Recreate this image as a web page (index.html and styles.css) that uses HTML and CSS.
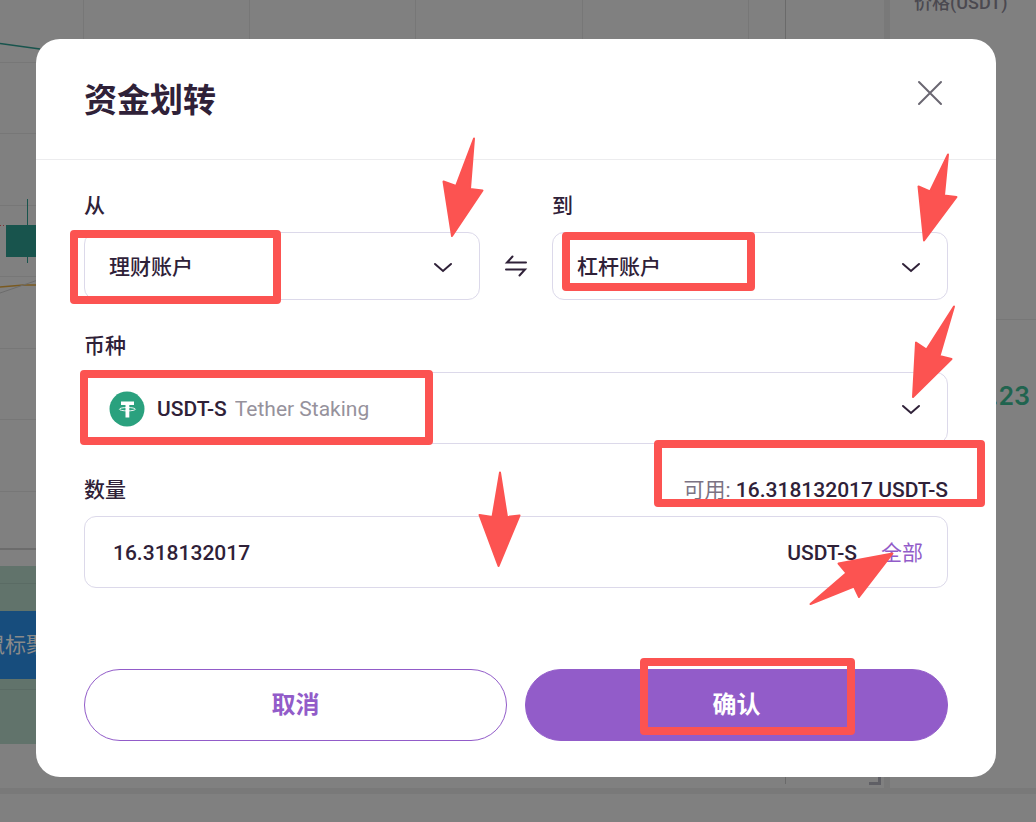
FILE: index.html
```html
<!DOCTYPE html>
<html lang="zh-CN">
<head>
  <meta charset="UTF-8">
  <meta name="viewport" content="width=device-width, initial-scale=1.0">
  <title>资金划转</title>
  <link rel="stylesheet" href="styles.css">
</head>
<body>

  <!-- Dimmed trading page -->
  <svg class="backdrop" width="1036" height="822" viewBox="0 0 1036 822" aria-hidden="true">
    <g fill="#777777">
      <rect x="83" y="0" width="1" height="40"/>
      <rect x="249" y="0" width="1" height="40"/>
      <rect x="415" y="0" width="1" height="40"/>
      <rect x="582" y="0" width="1" height="40"/>
      <rect x="748" y="0" width="1" height="40"/>
      <rect x="0" y="62" width="40" height="1"/>
      <rect x="0" y="133" width="40" height="1"/>
      <rect x="0" y="205" width="40" height="1"/>
      <rect x="0" y="276" width="40" height="1"/>
      <rect x="0" y="348" width="40" height="1"/>
      <rect x="0" y="419" width="40" height="1"/>
      <rect x="0" y="491" width="40" height="1"/>
      <rect x="990" y="319" width="46" height="1"/>
    </g>
    <rect x="785" y="0" width="1" height="784" fill="#6a6a6a"/>
    <rect x="884" y="0" width="6" height="790" fill="#797979"/>
    <rect x="0" y="788" width="1036" height="6" fill="#797979"/>
    <rect x="0" y="548" width="40" height="2" fill="#6c6c6c"/>
    <rect x="0" y="566" width="40" height="178" fill="#61736b"/>
    <rect x="0" y="583" width="40" height="1" fill="#5a6b64"/>
    <rect x="0" y="689" width="40" height="1" fill="#5a6b64"/>
    <rect x="0" y="611" width="40" height="68" fill="#174d7d"/>
    <path d="M0 43.500L40 49" stroke="#18544d" stroke-width="1.500"/>
    <path d="M0 225.500H36" stroke="#7a3535" stroke-dasharray="1 2"/>
    <rect x="27" y="199" width="1" height="64" fill="#18544d"/>
    <rect x="6" y="225" width="34" height="32" fill="#18544d"/>
    <path d="M0 287L24 285H40" stroke="#7a5a20" stroke-width="1.500" fill="none"/>
    <path d="M0 293L38 280" stroke="#6c6c6c" fill="none"/>
    <path d="M869 783.500H879.500V776" stroke="#5f5f65" stroke-width="3" fill="none"/>
    <text class="backdrop-tip" x="-16" y="652">鼠标聚</text>
    <text class="backdrop-price" x="914" y="9">价格(USDT)</text>
    <text class="backdrop-value" x="1030" y="405" text-anchor="end">.23</text>
  </svg>

  <!-- Transfer dialog -->
  <main class="overlay">
    <form class="modal" role="dialog" aria-labelledby="modal-title">
      <header class="modal-header">
        <h2 id="modal-title">资金划转</h2>
        <button type="button" class="close-btn" aria-label="关闭">
          <svg width="36" height="36" viewBox="0 0 36 36"><path d="M7 7L29 29M29 7L7 29"/></svg>
        </button>
      </header>

      <div class="modal-body">
        <div class="accounts">
          <div class="field">
            <label for="from">从</label>
            <div class="select-box">
              <select id="from">
                <option>理财账户</option>
                <option>杠杆账户</option>
              </select>
              <svg class="chevron" width="20" height="12" viewBox="0 0 20 12"><path d="M2 3L10 10L18 3"/></svg>
            </div>
          </div>
          <button type="button" class="swap-btn" aria-label="互换">
            <svg width="24" height="24" viewBox="0 0 24 24"><path d="M22 8.500H3L8.500 2.500M2 15.500H21L15.500 21.500"/></svg>
          </button>
          <div class="field">
            <label for="to">到</label>
            <div class="select-box">
              <select id="to">
                <option>杠杆账户</option>
                <option>理财账户</option>
              </select>
              <svg class="chevron" width="20" height="12" viewBox="0 0 20 12"><path d="M2 3L10 10L18 3"/></svg>
            </div>
          </div>
        </div>

        <div class="field">
          <label for="coin">币种</label>
          <div class="select-box coin-box">
            <div class="coin">
              <svg width="36" height="36" viewBox="0 0 36 36" aria-hidden="true">
                <circle cx="18" cy="18" r="17.500" fill="#2aa17e"/>
                <path d="M12 10.500H25V14H20.300V26.500H16.500V14H12Z" fill="#fff"/>
                <ellipse cx="18.400" cy="18.200" rx="8" ry="1.700" fill="none" stroke="#fff" stroke-width="0.900"/>
              </svg>
              <span class="coin-name">USDT-S</span>
            </div>
            <select id="coin">
              <option>Tether Staking</option>
            </select>
            <svg class="chevron" width="20" height="12" viewBox="0 0 20 12"><path d="M2 3L10 10L18 3"/></svg>
          </div>
        </div>

        <div class="field">
          <div class="label-row">
            <label for="amount">数量</label>
            <p class="available">可用: <strong>16.318132017 USDT-S</strong></p>
          </div>
          <div class="amount-box">
            <input id="amount" type="text" inputmode="decimal" value="16.318132017">
            <span class="unit">USDT-S</span>
            <button type="button" class="all-btn">全部</button>
          </div>
        </div>

        <div class="actions">
          <button type="button" class="btn cancel-btn">取消</button>
          <button type="submit" class="btn confirm-btn">确认</button>
        </div>
      </div>
    </form>
  </main>

  <!-- Red guide marks drawn over the dialog -->
  <svg class="marks" width="1036" height="822" viewBox="0 0 1036 822" aria-hidden="true">
    <g class="mark-box">
      <rect x="74" y="234" width="203" height="66"/>
      <rect x="566" y="236" width="185" height="51"/>
      <rect x="84" y="374" width="345" height="67"/>
      <rect x="658" y="444" width="323" height="59"/>
      <rect x="644" y="662" width="207" height="69"/>
    </g>
    <g class="mark-arrow">
      <path d="M474 138.500L456 186L443.500 181.500L452 236L482.500 190.500L470 189Z"/>
      <path d="M948 154.500L930 191.500L918.500 186.500L924 240.500L956.500 197L944 195.500Z"/>
      <path d="M954 306.500L926.500 349.500L916 342.500L913 397L951.500 359L939.500 356Z"/>
      <path d="M500 472.500L492.500 517L479.500 515L498.500 566L519.500 515.500L507 517Z"/>
      <path d="M810.500 604L854 586.500L859 597L892.500 553.500L838.500 563.500L846.500 573Z"/>
    </g>
  </svg>

</body>
</html>
```

FILE: styles.css
```css
/* General Styling */
* {
  margin: 0;
  padding: 0;
  box-sizing: border-box;
}

body {
  min-height: 100vh;
  background-color: #808080;
  color: #2f2138;
  font-family: Roboto, "Noto Sans CJK SC", sans-serif;
  font-size: 21px;
  font-weight: 500;
  line-height: 30px;
  overflow: hidden;
}

button,
input,
select {
  border: none;
  background: none;
  color: inherit;
  font: inherit;
}

button,
select {
  cursor: pointer;
}

/* Page behind the dialog */
.backdrop,
.marks {
  position: absolute;
  top: 0;
  left: 0;
}

.backdrop-tip {
  fill: #8a8a8a;
  font-size: 21px;
  font-weight: 400;
}

.backdrop-price {
  fill: #4b4950;
  font-size: 18px;
  font-weight: 500;
}

.backdrop-value {
  fill: #20644f;
  font-family: Inter, sans-serif;
  font-size: 25px;
  font-weight: 600;
}

/* Dialog */
.overlay {
  position: relative;
  padding: 39px 40px 45px 36px;
}

.modal {
  background-color: #fff;
  border-radius: 24px;
}

.modal-header {
  display: flex;
  justify-content: space-between;
  align-items: flex-start;
  padding: 36px 48px 32px;
  border-bottom: 1px solid #ececee;
}

.modal-header h2 {
  font-size: 33px;
  font-weight: 700;
  line-height: 52px;
}

.close-btn,
.swap-btn {
  display: flex;
  justify-content: center;
  align-items: center;
}

.close-btn path,
.swap-btn path,
.chevron path {
  fill: none;
  stroke: #2f2138;
  stroke-width: 2;
  stroke-linecap: round;
}

.close-btn path {
  stroke: #6a6772;
}

.modal-body {
  display: flex;
  flex-direction: column;
  gap: 31px;
  padding: 31px 48px 36px;
}

/* Fields */
.accounts {
  display: grid;
  grid-template-columns: 1fr 72px 1fr;
  align-items: end;
}

.swap-btn {
  height: 68px;
}

.field {
  display: flex;
  flex-direction: column;
  gap: 11px;
}

.select-box,
.amount-box {
  display: grid;
  align-items: center;
  height: 68px;
  padding-top: 2px;
  border: 1px solid #dcd9ea;
  border-radius: 12px;
}

.select-box select {
  grid-area: 1 / 1;
  width: 100%;
  height: 100%;
  padding: 0 60px 0 24px;
  appearance: none;
}

.chevron {
  grid-area: 1 / 1;
  justify-self: end;
  margin-right: 26px;
  pointer-events: none;
}

.select-box.coin-box {
  grid-template-columns: auto 1fr;
  height: 72px;
}

.coin {
  display: flex;
  align-items: center;
  gap: 12px;
  padding-left: 24px;
}

.coin-box select {
  grid-area: 1 / 2;
  padding-left: 8px;
  color: #96929c;
  font-weight: 400;
}

.coin-box .chevron {
  grid-area: 1 / 2;
}

.label-row {
  display: flex;
  justify-content: space-between;
}

.available {
  color: #7b7283;
  font-weight: 400;
}

.available strong {
  color: #2f2138;
  font-weight: 500;
}

.amount-box {
  grid-template-columns: 1fr auto auto;
  column-gap: 24px;
  height: 72px;
  padding: 2px 24px 0 28px;
}

.amount-box input {
  width: 100%;
  outline: none;
}

.all-btn {
  color: #925cc9;
  font-weight: 400;
}

/* Buttons */
.actions {
  display: grid;
  grid-template-columns: 1fr 1fr;
  gap: 18px;
  padding-top: 50px;
}

.btn {
  height: 72px;
  border: 1px solid #925cc9;
  border-radius: 36px;
  font-size: 24px;
  font-weight: 700;
}

.cancel-btn {
  color: #925cc9;
}

.confirm-btn {
  background-color: #925cc9;
  color: #fff;
}

/* Guide marks */
.marks {
  pointer-events: none;
}

.mark-box {
  fill: none;
  stroke: #fc5351;
  stroke-width: 8;
  stroke-linejoin: round;
}

.mark-arrow {
  fill: #fc5351;
  stroke: #fc5351;
  stroke-width: 2;
  stroke-linejoin: round;
}
```
